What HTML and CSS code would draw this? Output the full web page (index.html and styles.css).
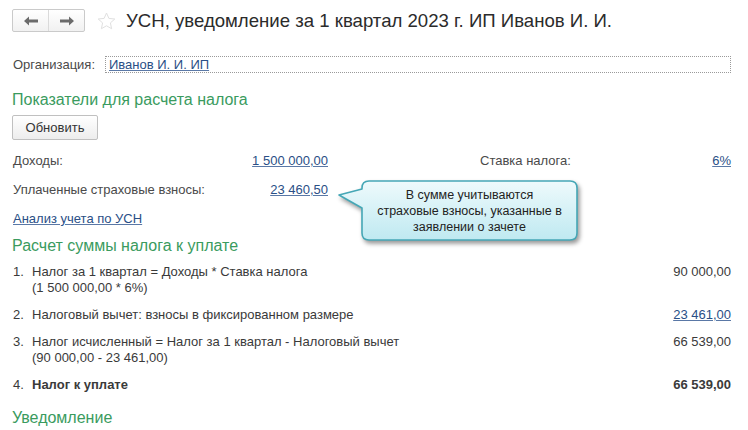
FILE: index.html
```html
<!DOCTYPE html>
<html lang="ru">
<head>
<meta charset="utf-8">
<title>УСН, уведомление за 1 квартал 2023 г.</title>
<link rel="stylesheet" href="styles.css">
</head>
<body>
<div class="page">
  <header class="topbar">
    <div class="nav">
      <button class="nav-btn" aria-label="Назад">
        <svg width="16" height="10" viewBox="0 0 16 10"><path d="M1 5 L6 0.5 V3.6 H15 V6.4 H6 V9.5 Z" fill="#6b6b6b"/></svg>
      </button>
      <button class="nav-btn" aria-label="Вперед">
        <svg width="16" height="10" viewBox="0 0 16 10"><path d="M15 5 L10 0.5 V3.6 H1 V6.4 H10 V9.5 Z" fill="#6b6b6b"/></svg>
      </button>
    </div>
    <svg class="star" width="19" height="18" viewBox="0 0 19 18"><path d="M9.5 1 L11.9 6.4 L17.8 7 L13.4 10.9 L14.6 16.7 L9.5 13.8 L4.4 16.7 L5.6 10.9 L1.2 7 L7.1 6.4 Z" fill="none" stroke="#e0e0e0" stroke-width="1" stroke-linejoin="round"/></svg>
    <h1 class="title">УСН, уведомление за 1 квартал 2023 г. ИП Иванов И. И.</h1>
  </header>

  <div class="org-row">
    <span class="label">Организация:</span>
    <div class="field"><a class="link" href="#">Иванов И. И. ИП</a></div>
  </div>

  <h2 class="section">Показатели для расчета налога</h2>
  <button class="btn">Обновить</button>

  <div class="indicators">
    <div class="grid">
      <span class="label">Доходы:</span>
      <a class="link value" href="#">1 500 000,00</a>
      <span></span>
      <span class="label">Ставка налога:</span>
      <a class="link value" href="#">6%</a>

      <span class="label">Уплаченные страховые взносы:</span>
      <a class="link value" href="#">23 460,50</a>
      <span></span><span></span><span></span>
    </div>
    <a class="link analysis" href="#">Анализ учета по УСН</a>

    <div class="callout">
      <svg class="callout-bg" width="256" height="74" viewBox="0 0 256 74">
        <defs>
          <linearGradient id="cg" x1="0" y1="0" x2="0" y2="1">
            <stop offset="0" stop-color="#eefafc"/>
            <stop offset="1" stop-color="#bfe9f1"/>
          </linearGradient>
        </defs>
        <path d="M39 6 H240 Q247 6 247 13 V58 Q247 65 240 65 H39 Q32 65 32 58 V33 L9 20 L32 14 V13 Q32 6 39 6 Z" fill="url(#cg)" stroke="#45a7b6" stroke-width="1.6" stroke-linejoin="round"/>
      </svg>
      <div class="callout-text">В сумме учитываются<br>страховые взносы, указанные в<br>заявлении о зачете</div>
    </div>
  </div>

  <h2 class="section calc">Расчет суммы налога к уплате</h2>

  <ol class="calc-list">
    <li class="row">
      <span class="num">1.</span>
      <span class="text">Налог за 1 квартал = Доходы * Ставка налога<br>(1 500 000,00 * 6%)</span>
      <span class="amount">90 000,00</span>
    </li>
    <li class="row">
      <span class="num">2.</span>
      <span class="text">Налоговый вычет: взносы в фиксированном размере</span>
      <a class="amount link" href="#">23 461,00</a>
    </li>
    <li class="row">
      <span class="num">3.</span>
      <span class="text">Налог исчисленный = Налог за 1 квартал - Налоговый вычет<br>(90 000,00 - 23 461,00)</span>
      <span class="amount">66 539,00</span>
    </li>
    <li class="row bold">
      <span class="num">4.</span>
      <span class="text">Налог к уплате</span>
      <span class="amount">66 539,00</span>
    </li>
  </ol>

  <h2 class="section notice">Уведомление</h2>
</div>
</body>
</html>
```

FILE: styles.css
```css
html, body {
  margin: 0;
  padding: 0;
  background: #ffffff;
}

body {
  font-family: "Liberation Sans", Arial, sans-serif;
  font-size: 13px;
  color: #404040;
  overflow: hidden;
}

.page {
  padding: 0 17px 0 12px;
}

/* header */
.topbar {
  display: flex;
  align-items: center;
  height: 23px;
  padding-top: 9px;
}

.nav {
  display: flex;
  width: 73px;
  height: 23px;
  box-sizing: border-box;
  border: 1px solid #cacaca;
  border-radius: 2px;
  background: linear-gradient(#ffffff, #f1f1f1);
}

.nav-btn {
  flex: 1;
  display: flex;
  align-items: center;
  justify-content: center;
  border: 0;
  padding: 0;
  margin: 0;
  background: transparent;
}

.nav-btn + .nav-btn {
  border-left: 1px solid #dadada;
}

.star {
  margin-left: 12px;
  flex: none;
}

.title {
  margin: 0 0 0 10px;
  font-size: 18.6px;
  font-weight: normal;
  line-height: 23px;
  color: #2b2b2b;
  white-space: nowrap;
}

/* organization */
.org-row {
  display: flex;
  align-items: center;
  margin-top: 24px;
  height: 17px;
}

.label {
  color: #4a4a4a;
}

.org-row .label {
  width: 92px;
  flex: none;
  padding-left: 1px;
}

.field {
  flex: 1;
  height: 17px;
  box-sizing: border-box;
  border: 1px dotted #9a9a9a;
  padding: 0 0 0 3px;
  line-height: 15px;
}

.link {
  color: #2a4f86;
  text-decoration: underline;
  text-decoration-color: #5a78a6;
}

/* section headings */
.section {
  margin: 17px 0 0 0;
  font-size: 16px;
  font-weight: normal;
  line-height: 20px;
  color: #3a9b5e;
}

.btn {
  display: block;
  margin-top: 5px;
  width: 86px;
  height: 25px;
  border: 1px solid #c0c0c0;
  border-radius: 2px;
  background: linear-gradient(#ffffff, #ededed);
  font-family: "Liberation Sans", Arial, sans-serif;
  font-size: 13px;
  color: #333333;
  padding: 0;
}

/* indicators */
.indicators {
  position: relative;
  margin-top: 12px;
}

.grid {
  display: grid;
  grid-template-columns: 230px 86px 151px 100px 1fr;
  grid-auto-rows: 29px;
  line-height: 18px;
}

.grid .label {
  padding-left: 1px;
}

.value {
  justify-self: end;
}

.analysis {
  display: block;
  line-height: 18px;
  padding-left: 1px;
}

.callout {
  position: absolute;
  left: 318px;
  top: 23px;
  width: 256px;
  height: 74px;
}

.callout-bg {
  position: absolute;
  left: 0;
  top: 0;
  filter: drop-shadow(2px 3px 2px rgba(0, 0, 0, 0.4));
}

.callout-text {
  position: absolute;
  left: 32px;
  top: 6px;
  width: 215px;
  height: 59px;
  display: flex;
  align-items: center;
  justify-content: center;
  text-align: center;
  font-size: 12.5px;
  line-height: 16px;
  color: #222222;
  white-space: nowrap;
}

.section.calc {
  margin-top: 8px;
}

/* calculation list */
.calc-list {
  list-style: none;
  margin: 8px 0 0 0;
  padding: 0;
}

.row {
  display: flex;
  align-items: flex-start;
  line-height: 16px;
  color: #3a3a3a;
}

.row + .row {
  margin-top: 11px;
}

.num {
  width: 20px;
  flex: none;
  padding-left: 1px;
  box-sizing: border-box;
}

.text {
  flex: 1;
}

.amount {
  flex: none;
  text-align: right;
}

.row.bold {
  font-weight: bold;
}

.row.bold .num {
  font-weight: normal;
}

.section.notice {
  margin-top: 15px;
}
```
